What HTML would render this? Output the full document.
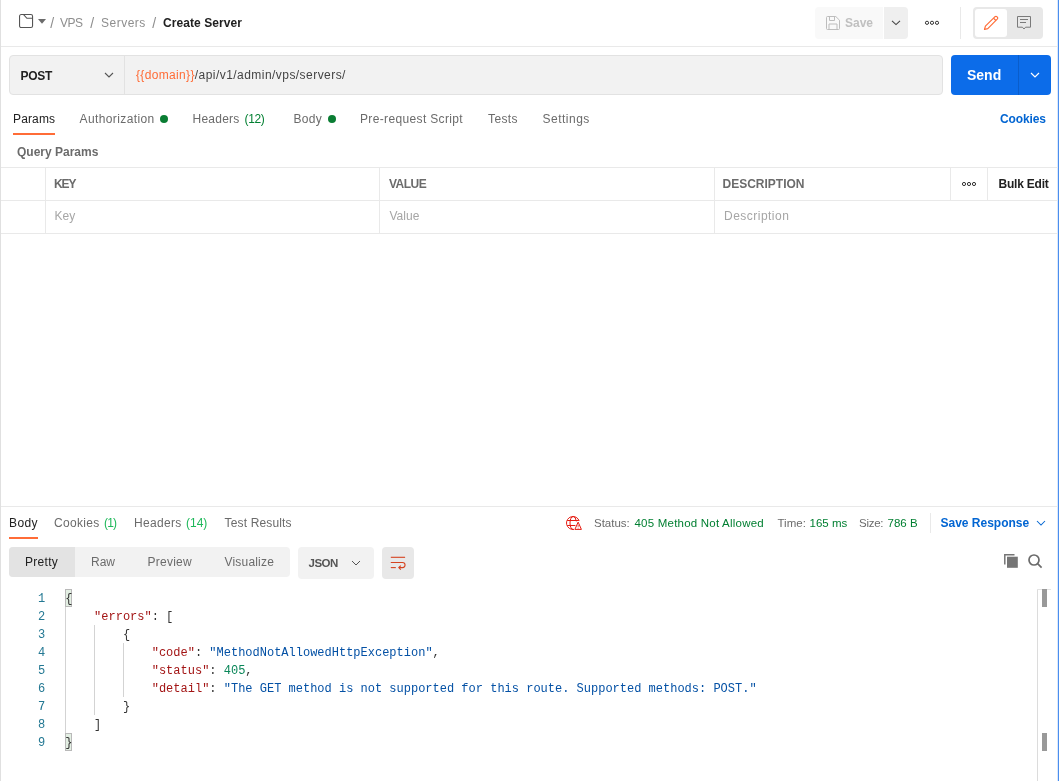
<!DOCTYPE html>
<html lang="en">
<head>
<meta charset="utf-8">
<title>Create Server</title>
<style>
*{box-sizing:border-box;margin:0;padding:0}
html,body{width:1059px;height:781px;overflow:hidden;background:#fff}
body{position:relative;font-family:"Liberation Sans",sans-serif;font-size:12px;color:#212121}
.a{position:absolute}
.t{position:absolute;white-space:nowrap;line-height:16px;font-size:12px}
.b{font-weight:bold}
.g{color:#6b6b6b}
.lg{color:#a6a6a6}
.gr{color:#007f31}
.bl{color:#0265d2}
.hl{position:absolute;height:1px;background:#e9e9e9;left:0}
.vl{position:absolute;width:1px;background:#e9e9e9}
.code{position:absolute;white-space:pre;font-family:"Liberation Mono",monospace;font-size:12px;line-height:18px;left:66px;color:#333}
.ln{position:absolute;white-space:pre;font-family:"Liberation Mono",monospace;font-size:12px;line-height:18px;color:#237893;left:38px;width:7.2px;text-align:right}
.k{color:#a31515}.s{color:#0451a5}.n{color:#098658}
</style>
</head>
<body>
<div id="root" style="position:absolute;left:0;top:0;width:1059px;height:781px;will-change:transform">
<!-- outer edges -->
<div class="a" style="left:0;top:0;width:1px;height:781px;background:#e0e0e0"></div>
<div class="a" style="left:1057px;top:0;width:1px;height:781px;background:#dbe8fc"></div>
<div class="a" style="left:1058px;top:0;width:1px;height:781px;background:#4a8eee"></div>

<!-- header -->
<svg class="a" style="left:18px;top:13px" width="16" height="16" viewBox="0 0 16 16" fill="none" stroke="#555" stroke-width="1.1"><rect x="1.550" y="1.550" width="13" height="13" rx="1.600"/><path d="M5.600 1.600l3.300 3.700h5.600"/></svg>
<svg class="a" style="left:38px;top:19px" width="8" height="5" viewBox="0 0 8 5"><path d="M0 0.100h8L4 4.700z" fill="#6b6b6b"/></svg>
<span class="t" id="h1" style="left:50.2px;top:15px;font-size:14px;color:#8e8e8e">/</span>
<span class="t lg" id="h2" style="left:60px;top:15px;color:#8e8e8e;letter-spacing:-0.5px">VPS</span>
<span class="t" id="h3" style="left:90.2px;top:15px;font-size:14px;color:#8e8e8e">/</span>
<span class="t lg" id="h4" style="left:101px;top:15px;color:#8e8e8e;letter-spacing:0.5px">Servers</span>
<span class="t" id="h5" style="left:152.2px;top:15px;font-size:14px;color:#8e8e8e">/</span>
<span class="t b" id="h6" style="left:163px;top:15px;letter-spacing:0.08px">Create Server</span>

<div class="a" style="left:815px;top:7px;width:68px;height:32px;background:#f9f9f9;border-radius:4px 0 0 4px"></div>
<div class="a" style="left:884px;top:7px;width:24px;height:32px;background:#efefef;border-radius:0 4px 4px 0"></div>
<span class="t b" id="sv" style="left:845px;top:15px;color:#c0c0c0">Save</span>
<div class="vl" style="left:960px;top:7px;height:32px"></div>
<div class="a" style="left:973px;top:7px;width:70px;height:32px;background:#e8e8e8;border-radius:4px"></div>
<div class="a" style="left:975px;top:9px;width:32px;height:28px;background:#fff;border-radius:3px"></div>
<div class="hl" style="top:46px;width:1057px;left:1px"></div>

<!-- url bar -->
<div class="a" style="left:9px;top:55px;width:934px;height:40px;background:#f2f2f2;border:1px solid #e2e2e2;border-radius:4px"></div>
<div class="vl" style="left:124px;top:56px;height:38px;background:#e2e2e2"></div>
<span class="t b" id="post" style="left:20.5px;top:68px;letter-spacing:-0.25px">POST</span>
<span class="t" id="url" style="left:136px;top:67px;color:#444;letter-spacing:0.45px"><span style="color:#ff6c37;letter-spacing:0.34px" id="dom">{{domain}}</span>/api/v1/admin/vps/servers/</span>
<div class="a" style="left:951px;top:55px;width:100px;height:40px;background:#0c6ce9;border-radius:4px"></div>
<div class="vl" style="left:1018px;top:55px;height:40px;background:#0a5dcb"></div>
<span class="t b" id="send" style="left:967px;top:66px;font-size:14px;line-height:18px;color:#fff">Send</span>

<!-- request tabs -->
<span class="t" id="t1" style="left:13px;top:111px;letter-spacing:0.15px">Params</span>
<div class="a" style="left:13px;top:133px;width:42px;height:2px;background:#ff6c37"></div>
<span class="t g" id="t2" style="left:79.5px;top:111px;letter-spacing:0.396px">Authorization</span>
<div class="a" style="left:160px;top:115px;width:8px;height:8px;border-radius:50%;background:#0a7d33"></div>
<span class="t g" id="t3" style="left:192.5px;top:111px;letter-spacing:0.25px">Headers</span>
<span class="t gr" id="t3b" style="left:244.5px;top:111px;letter-spacing:-0.333px">(12)</span>
<span class="t g" id="t4" style="left:293.5px;top:111px;letter-spacing:0.333px">Body</span>
<div class="a" style="left:328px;top:115px;width:8px;height:8px;border-radius:50%;background:#0a7d33"></div>
<span class="t g" id="t5" style="left:360px;top:111px;letter-spacing:0.353px">Pre-request Script</span>
<span class="t g" id="t6" style="left:488px;top:111px;letter-spacing:0.375px">Tests</span>
<span class="t g" id="t7" style="left:542.5px;top:111px;letter-spacing:0.5px">Settings</span>
<span class="t b bl" id="ck" style="left:1000px;top:111px;letter-spacing:-0.133px">Cookies</span>

<span class="t b g" id="qp" style="left:17px;top:144px">Query Params</span>

<!-- table -->
<div class="hl" style="top:167px;width:1057px;left:1px"></div>
<div class="hl" style="top:200px;width:1057px;left:1px"></div>
<div class="hl" style="top:233px;width:1057px;left:1px"></div>
<div class="vl" style="left:45px;top:167px;height:67px"></div>
<div class="vl" style="left:379px;top:167px;height:67px"></div>
<div class="vl" style="left:714px;top:167px;height:67px"></div>
<div class="vl" style="left:950px;top:167px;height:34px"></div>
<div class="vl" style="left:987px;top:167px;height:34px"></div>
<span class="t b g" id="c1" style="left:54px;top:176px;letter-spacing:-1.125px">KEY</span>
<span class="t b g" id="c2" style="left:389px;top:176px;letter-spacing:-0.5px">VALUE</span>
<span class="t b g" id="c3" style="left:722.5px;top:176px">DESCRIPTION</span>
<span class="t b" id="be" style="left:998.5px;top:176px;letter-spacing:-0.213px">Bulk Edit</span>
<span class="t lg" id="p1" style="left:54.5px;top:208px">Key</span>
<span class="t lg" id="p2" style="left:389.5px;top:208px">Value</span>
<span class="t lg" id="p3" style="left:724px;top:208px;letter-spacing:0.48px">Description</span>

<!-- response -->
<div class="hl" style="top:506px;width:1057px;left:1px"></div>
<span class="t" id="r1" style="left:9px;top:515px;letter-spacing:0.4px">Body</span>
<div class="a" style="left:9px;top:537px;width:29px;height:2px;background:#ff6c37"></div>
<span class="t g" id="r2" style="left:54px;top:515px;letter-spacing:0.333px">Cookies</span>
<span class="t" id="r2b" style="left:104px;top:515px;color:#1eb85a;letter-spacing:-0.8px">(1)</span>
<span class="t g" id="r3" style="left:134px;top:515px;letter-spacing:0.333px">Headers</span>
<span class="t" id="r3b" style="left:186px;top:515px;color:#1eb85a">(14)</span>
<span class="t g" id="r4" style="left:224.5px;top:515px;letter-spacing:0.159px">Test Results</span>

<span class="t g" id="s1" style="left:594px;top:515px;font-size:11.5px">Status:</span>
<span class="t gr" id="s2" style="left:634.5px;top:515px;font-size:11.5px;letter-spacing:0.214px">405 Method Not Allowed</span>
<span class="t g" id="s3" style="left:777.5px;top:515px;font-size:11.5px">Time:</span>
<span class="t gr" id="s4" style="left:809.5px;top:515px;font-size:11.5px">165 ms</span>
<span class="t g" id="s5" style="left:859px;top:515px;font-size:11.5px;letter-spacing:-0.25px">Size:</span>
<span class="t gr" id="s6" style="left:887.5px;top:515px;font-size:11.5px">786 B</span>
<div class="vl" style="left:930px;top:513px;height:20px"></div>
<span class="t b bl" id="sr" style="left:940.5px;top:515px">Save Response</span>

<div class="a" style="left:9px;top:547px;width:281px;height:30px;background:#f2f2f2;border-radius:4px"></div>
<div class="a" style="left:9px;top:547px;width:66px;height:30px;background:#e3e3e3;border-radius:4px 0 0 4px"></div>
<span class="t" id="v1" style="left:25px;top:554px;letter-spacing:0.3px">Pretty</span>
<span class="t g" id="v2" style="left:91px;top:554px">Raw</span>
<span class="t g" id="v3" style="left:147.5px;top:554px;letter-spacing:0.25px">Preview</span>
<span class="t g" id="v4" style="left:224.5px;top:554px;letter-spacing:0.188px">Visualize</span>
<div class="a" style="left:298px;top:547px;width:76px;height:32px;background:#f2f2f2;border-radius:4px"></div>
<span class="t b" id="js" style="left:308.5px;top:555px;font-size:11.5px;color:#555;letter-spacing:-0.5px">JSON</span>
<div class="a" style="left:382px;top:547px;width:32px;height:32px;background:#e8e8e8;border-radius:4px"></div>


<!-- icons -->
<svg class="a" style="left:826px;top:16px" width="14" height="14" viewBox="0 0 14 14" fill="none" stroke="#bdbdbd" stroke-width="1"><path d="M0.5 1.5a1 1 0 0 1 1-1h8.3l3.7 3.7v8.3a1 1 0 0 1-1 1h-11a1 1 0 0 1-1-1z"/><path d="M3.5 0.5v4h5v-4"/><path d="M3 13.5v-5.5h8v5.5"/></svg>
<svg class="a" style="left:891px;top:19px" width="10" height="7" viewBox="0 0 10 7" fill="none" stroke="#444" stroke-width="1.1"><path d="M1 1.8l4 3.8 4-3.8"/></svg>
<svg class="a" style="left:924px;top:20px" width="16" height="6" viewBox="0 0 16 6" fill="none" stroke="#333" stroke-width="1"><circle cx="3" cy="2.8" r="1.6"/><circle cx="8" cy="2.8" r="1.6"/><circle cx="13" cy="2.8" r="1.6"/></svg>
<svg class="a" style="left:983px;top:15px" width="16" height="16" viewBox="0 0 16 16" fill="none" stroke="#ff6c37" stroke-width="1.150" stroke-linejoin="round"><path d="M2.400 11.200L11.800 1.800A1.700 1.700 0 0 1 14.200 4.200L4.800 13.600L1.500 14.500Z"/><path d="M10.500 3.100l2.400 2.400"/></svg>
<svg class="a" style="left:1016px;top:15px" width="16" height="16" viewBox="0 0 16 16" fill="none" stroke="#7a7a7a" stroke-width="1"><path d="M1.500 1.500h13v10.700h-4.900l-1.600 1.800-1.600-1.800h-4.900z"/><path d="M4 4.5h8M4 7.5h6"/></svg>
<svg class="a" style="left:104px;top:71px" width="10" height="8" viewBox="0 0 10 8" fill="none" stroke="#555" stroke-width="1.1"><path d="M1 2l4 4 4-4"/></svg>
<svg class="a" style="left:1030px;top:71px" width="10" height="8" viewBox="0 0 10 8" fill="none" stroke="#fff" stroke-width="1.2"><path d="M1 2l4 4 4-4"/></svg>
<svg class="a" style="left:961px;top:181px" width="16" height="6" viewBox="0 0 16 6" fill="none" stroke="#333" stroke-width="1"><circle cx="3" cy="3" r="1.6"/><circle cx="8" cy="3" r="1.6"/><circle cx="13" cy="3" r="1.6"/></svg>
<svg class="a" style="left:565px;top:515px" width="18" height="16" viewBox="0 0 18 16" fill="none" stroke="#e5190f" stroke-width="1"><path d="M9 14.420A6.500 6.500 0 1 1 14.200 6.050"/><path d="M8.200 1.500A3.200 6.500 0 0 0 8.200 14.500"/><path d="M8.200 1.500A3.200 6.500 0 0 1 11.300 6.400"/><path d="M2.200 5.500H13.800M2.200 10.500H10.400"/><path d="M13.150 7.100L16.400 14.400H9.900Z" stroke-linejoin="round"/><path d="M13.150 9.800v2" stroke-width="0.800"/><path d="M13.150 12.700v0.800" stroke-width="0.800"/></svg>
<svg class="a" style="left:1036px;top:519px" width="10" height="8" viewBox="0 0 10 8" fill="none" stroke="#0265d2" stroke-width="1.050"><path d="M1 2l4 4 4-4"/></svg>
<svg class="a" style="left:1003px;top:553px" width="16" height="16" viewBox="0 0 16 16"><path d="M1.800 11.500v-9.700h9.700" fill="none" stroke="#757575" stroke-width="1.500"/><rect x="4" y="3.700" width="10.800" height="11.100" fill="#757575"/></svg>
<svg class="a" style="left:1027px;top:553px" width="16" height="16" viewBox="0 0 16 16" fill="none" stroke="#6b6b6b" stroke-width="1.700"><circle cx="7" cy="7" r="5"/><path d="M10.600 10.600l4 4"/></svg>
<svg class="a" style="left:351px;top:559px" width="10" height="8" viewBox="0 0 10 8" fill="none" stroke="#555" stroke-width="1"><path d="M1 2l4 4 4-4"/></svg>
<svg class="a" style="left:390px;top:555px" width="16" height="16" viewBox="0 0 16 16" fill="none" stroke="#d5421f" stroke-width="1.100"><path d="M0.800 2.300h14.300"/><path d="M0.800 7.500h11.700a2.550 2.550 0 0 1 0 5.100h-3.500"/><path d="M10.800 10.600l-2 2 2 2"/><path d="M0.800 12.600h5"/></svg>
<!-- code -->
<div class="a" style="left:65px;top:589px;width:7px;height:18px;background:#e3efe3;border:1px solid #b9b9b9"></div>
<div class="a" style="left:65px;top:733px;width:7px;height:18px;background:#e3efe3;border:1px solid #b9b9b9"></div>
<div class="vl" style="left:65px;top:607px;height:126px;background:#d3d3d3"></div>
<div class="vl" style="left:94px;top:625px;height:90px;background:#d3d3d3"></div>
<div class="vl" style="left:123px;top:643px;height:54px;background:#d3d3d3"></div>
<pre class="ln" style="top:590px">1
2
3
4
5
6
7
8
9</pre>
<pre class="code" id="code" style="top:590px;left:65.3px">{
    <span class="k">"errors"</span>: [
        {
            <span class="k">"code"</span>: <span class="s">"MethodNotAllowedHttpException"</span>,
            <span class="k">"status"</span>: <span class="n">405</span>,
            <span class="k">"detail"</span>: <span class="s">"The GET method is not supported for this route. Supported methods: POST."</span>
        }
    ]
}</pre>

<!-- scrollbar -->
<div class="vl" style="left:1037px;top:589px;height:192px;background:#dcdcdc"></div>
<div class="a" style="left:1037px;top:589px;width:14px;height:1px;background:#e4e4e4"></div>
<div class="a" style="left:1042px;top:589px;width:5px;height:18px;background:#999"></div>
<div class="a" style="left:1042px;top:733px;width:5px;height:18px;background:#999"></div>
</div>
</body>
</html>
